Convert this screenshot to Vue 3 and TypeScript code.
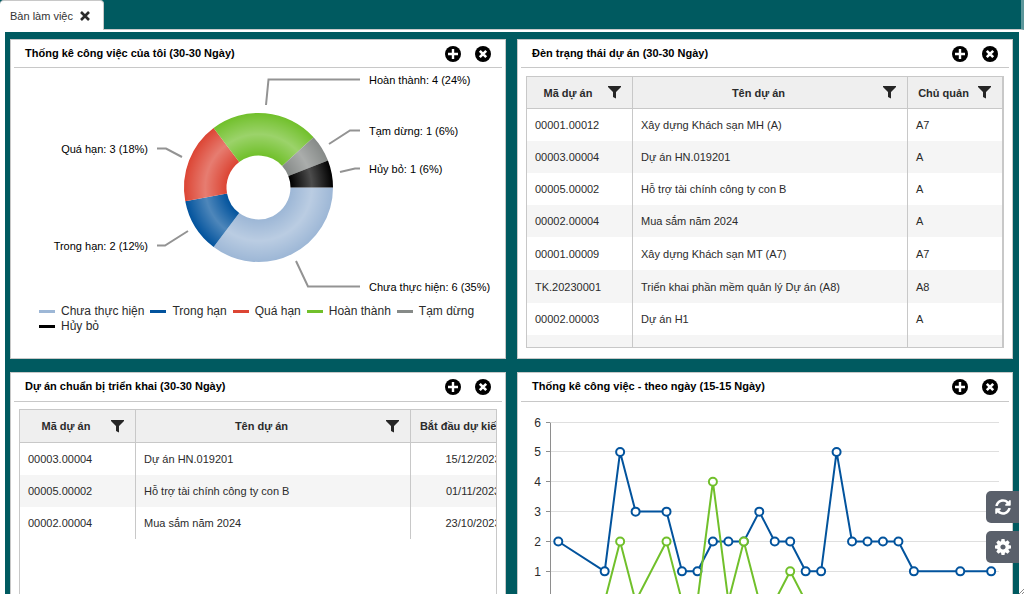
<script setup lang="ts">
interface Slice {
  label: string
  count: number
  color: string
  leader: string
  x: number
  y: number
  anchor: 'start' | 'end'
}

interface Project {
  code: string
  name: string
  last: string
  tall?: boolean
}

type Sample = [day: number, value: number]

const slices: Slice[] = [
  { label: 'Chưa thực hiện', count: 6, color: '#9db7d6', leader: '285,193 297,218.5 349,218.5', x: 358, y: 223, anchor: 'start' },
  { label: 'Trong hạn', count: 2, color: '#02539d', leader: '177,163 154,177.5 146,177.5', x: 137, y: 182, anchor: 'end' },
  { label: 'Quá hạn', count: 3, color: '#dc4534', leader: '171,89 155,80.5 146,80.5', x: 137, y: 85, anchor: 'end' },
  { label: 'Hoàn thành', count: 4, color: '#71c02b', leader: '255,37 257.5,11.5 349,11.5', x: 358, y: 16, anchor: 'start' },
  { label: 'Tạm dừng', count: 1, color: '#868a88', leader: '318,76 339,62.5 349,62.5', x: 358, y: 67, anchor: 'start' },
  { label: 'Hủy bỏ', count: 1, color: '#000000', leader: '329,104 344,100.5 349,100.5', x: 358, y: 105, anchor: 'start' },
]

const total = slices.reduce((sum, s) => sum + s.count, 0)
const center = { x: 247.5, y: 119.5 }
const outer = 74.5
const inner = 32

function polar(radius: number, angle: number): string {
  return `${(center.x + radius * Math.cos(angle)).toFixed(2)} ${(center.y + radius * Math.sin(angle)).toFixed(2)}`
}

let turn = 0
const arcs = slices.map((s) => {
  const from = turn
  turn += (s.count / total) * Math.PI * 2
  return {
    color: s.color,
    d: `M${polar(outer, from)}A${outer} ${outer} 0 0 1 ${polar(outer, turn)}L${polar(inner, turn)}A${inner} ${inner} 0 0 0 ${polar(inner, from)}Z`,
  }
})

function caption(s: Slice): string {
  return `${s.label}: ${s.count} (${Math.round((s.count / total) * 100)}%)`
}

const statusRows: Project[] = [
  { code: '00001.00012', name: 'Xây dựng Khách sạn MH (A)', last: 'A7' },
  { code: '00003.00004', name: 'Dự án HN.019201', last: 'A' },
  { code: '00005.00002', name: 'Hỗ trợ tài chính công ty con B', last: 'A' },
  { code: '00002.00004', name: 'Mua sắm năm 2024', last: 'A' },
  { code: '00001.00009', name: 'Xây dựng Khách sạn MT (A7)', last: 'A7', tall: true },
  { code: 'TK.20230001', name: 'Triển khai phần mềm quản lý Dự án (A8)', last: 'A8', tall: true },
  { code: '00002.00003', name: 'Dự án H1', last: 'A' },
  { code: '', name: '', last: '' },
]

const upcomingRows: Project[] = [
  { code: '00003.00004', name: 'Dự án HN.019201', last: '15/12/2023' },
  { code: '00005.00002', name: 'Hỗ trợ tài chính công ty con B', last: '01/11/2023' },
  { code: '00002.00004', name: 'Mua sắm năm 2024', last: '23/10/2023' },
]

const planned: Sample[] = [
  [0, 2], [3, 1], [4, 5], [5, 3], [7, 3], [8, 1], [9, 1], [10, 2], [11, 2], [12, 2], [13, 3], [14, 2],
  [15, 2], [16, 1], [17, 1], [18, 5], [19, 2], [20, 2], [21, 2], [22, 2], [23, 1], [26, 1], [28, 1],
]
const finished: Sample[] = [
  [3, 0], [4, 2], [5, 0], [7, 2], [8, 0], [9, 0], [10, 4], [11, 0], [12, 2], [13, 0], [14, 0], [15, 1], [16, 0],
]
const series = [
  { color: '#02539d', samples: planned },
  { color: '#71c02b', samples: finished },
]
const levels = [6, 5, 4, 3, 2, 1, 0]

const dayX = (day: number): number => 40.3 + day * 15.46
const valueY = (value: number): number => 199.2 - value * 29.85
const gridY = (value: number): number => Math.floor(valueY(value)) + 0.5
const line = (samples: Sample[]): string => samples.map(([d, v]) => `${dayX(d).toFixed(1)},${valueY(v).toFixed(1)}`).join(' ')

const teeth = [0, 45, 90, 135, 180, 225, 270, 315]

const panels = [
  { id: 'mine', title: 'Thống kê công việc của tôi (30-30 Ngày)' },
  { id: 'status', title: 'Đèn trạng thái dự án (30-30 Ngày)' },
  { id: 'upcoming', title: 'Dự án chuẩn bị triển khai (30-30 Ngày)' },
  { id: 'daily', title: 'Thống kê công việc - theo ngày (15-15 Ngày)' },
]

const tables = {
  status: { heads: ['Mã dự án', 'Tên dự án', 'Chủ quản'], rows: statusRows },
  upcoming: { heads: ['Mã dự án', 'Tên dự án', 'Bắt đầu dự kiến'], rows: upcomingRows },
}
</script>

<template>
  <div class="page">
    <nav class="tabs">
      <div class="tab">
        <a href="#" class="tab-link">Bàn làm việc</a>
        <button type="button" class="tab-close" aria-label="Đóng">
          <svg viewBox="0 0 10 10" width="10" height="10"><path d="M1 1L9 9M9 1L1 9" stroke="#2b2b2b" stroke-width="2.6" /></svg>
        </button>
      </div>
    </nav>

    <main class="workspace">
      <section v-for="panel in panels" :key="panel.id" class="panel">
        <header class="panel-head">
          <h2>{{ panel.title }}</h2>
          <div class="tools">
            <button type="button" aria-label="Thêm">
              <svg viewBox="0 0 16 16" width="16" height="16"><circle cx="8" cy="8" r="8" /><path d="M8 3V13M3 8H13" stroke="#fff" stroke-width="2.4" /></svg>
            </button>
            <button type="button" aria-label="Đóng">
              <svg viewBox="0 0 16 16" width="16" height="16"><circle cx="8" cy="8" r="8" /><path d="M4.8 4.8L11.2 11.2M11.2 4.8L4.8 11.2" stroke="#fff" stroke-width="2.6" /></svg>
            </button>
          </div>
        </header>

        <div v-if="panel.id === 'mine'" class="donut">
          <svg viewBox="0 0 494 232" role="img" :aria-label="panel.title">
            <defs>
              <radialGradient id="bevel" gradientUnits="userSpaceOnUse" :cx="center.x" :cy="center.y" :r="outer">
                <stop offset="0.43" stop-color="#fff" stop-opacity="0" />
                <stop offset="0.715" stop-color="#fff" stop-opacity="0.3" />
                <stop offset="1" stop-color="#fff" stop-opacity="0" />
              </radialGradient>
            </defs>
            <path v-for="arc in arcs" :key="arc.color" :d="arc.d" :fill="arc.color" />
            <path v-for="arc in arcs" :key="'b' + arc.color" :d="arc.d" fill="url(#bevel)" />
            <g v-for="s in slices" :key="s.label">
              <polyline :points="s.leader" fill="none" stroke="#939393" stroke-width="2" />
              <text :x="s.x" :y="s.y" :text-anchor="s.anchor">{{ caption(s) }}</text>
            </g>
          </svg>
          <ul class="legend">
            <li v-for="s in slices" :key="s.label"><i :style="{ background: s.color }"></i>{{ s.label }}</li>
          </ul>
        </div>

        <div v-else-if="panel.id === 'status' || panel.id === 'upcoming'" class="grid" :class="panel.id">
          <table>
            <colgroup><col class="c1" /><col class="c2" /><col class="c3" /></colgroup>
            <thead>
              <tr>
                <th v-for="head in tables[panel.id as 'status' | 'upcoming'].heads" :key="head" scope="col">
                  <div class="th">
                    <span>{{ head }}</span>
                    <button type="button" :aria-label="'Lọc ' + head">
                      <svg viewBox="0 0 13 13" width="13" height="13"><path d="M0 0H13V1L8 6V12.500L5 11V6L0 1Z" fill="#262626" /></svg>
                    </button>
                  </div>
                </th>
              </tr>
            </thead>
            <tbody>
              <tr v-for="row in tables[panel.id as 'status' | 'upcoming'].rows" :key="row.code" :class="{ tall: row.tall }">
                <td>{{ row.code }}</td>
                <td>{{ row.name }}</td>
                <td>{{ row.last }}</td>
              </tr>
            </tbody>
          </table>
        </div>

        <svg v-else class="lines" viewBox="0 0 494 280" role="img" :aria-label="panel.title">
          <g v-for="level in levels" :key="level">
            <line x1="33" x2="481" :y1="gridY(level)" :y2="gridY(level)" stroke="#dfdfdf" />
            <line x1="28" x2="32" :y1="gridY(level)" :y2="gridY(level)" stroke="#8e8e8e" />
            <text x="23" :y="gridY(level) + 4" text-anchor="end">{{ level }}</text>
          </g>
          <line x1="32.5" x2="32.5" :y1="gridY(6)" :y2="gridY(0)" stroke="#8e8e8e" />
          <g v-for="s in series" :key="s.color" fill="none" :stroke="s.color" stroke-width="2">
            <polyline :points="line(s.samples)" stroke-linejoin="round" />
            <circle v-for="[day, value] in s.samples" :key="day" :cx="dayX(day)" :cy="valueY(value)" r="4" fill="#fff" />
          </g>
        </svg>
      </section>
    </main>

    <aside class="float">
      <button type="button" aria-label="Tải lại">
        <svg viewBox="0 0 512 512" width="16" height="16" fill="#fff">
          <path d="M370.7 133.3C339.5 104 298.900 88 255.800 88c-77.400.1-144.300 53.200-162.700 126.900-1.400 5.300-6.200 9.100-11.700 9.100H24.100c-7.500 0-13.200-6.800-11.800-14.200C33.900 94.900 134.800 8 256 8c66.400 0 126.800 26.100 171.300 68.700L463 41C478.100 25.900 504 36.600 504 57.900V192c0 13.300-10.700 24-24 24H345.900c-21.300 0-32-25.900-16.900-41zM32 296h134.100c21.300 0 32 25.900 16.900 41l-41.700 41.700c31.200 29.300 71.800 45.300 114.800 45.300 77.500-.1 144.400-53.100 162.800-126.800 1.400-5.400 6.200-9.200 11.700-9.200h57.300c7.500 0 13.200 6.800 11.800 14.200C478.100 417.100 377.200 504 256 504c-66.400 0-126.800-26.100-171.300-68.700L49 471C33.900 486.100 8 475.400 8 454.100V320c0-13.300 10.700-24 24-24z" />
        </svg>
      </button>
      <button type="button" aria-label="Cài đặt">
        <svg viewBox="-8 -8 16 16" width="16" height="16">
          <path v-for="t in teeth" :key="t" d="M-2.100 -5L-1.500 -8H1.500L2.100 -5Z" fill="#fff" :transform="`rotate(${t})`" />
          <circle r="4.300" fill="none" stroke="#fff" stroke-width="3.400" />
        </svg>
      </button>
    </aside>
    <svg class="grip" viewBox="0 0 5 5" width="5" height="5" aria-hidden="true"><path d="M0 5L5 0M3 5L5 3" stroke="#8a8a8a" /></svg>
  </div>
</template>

<style>
body {
  margin: 0;
  background: #fff;
}
</style>

<style scoped>
.page {
  position: relative;
  display: flex;
  flex-direction: column;
  box-sizing: border-box;
  height: 100vh;
  overflow: hidden;
  font-family: "Liberation Sans", Arial, sans-serif;
  font-size: 11px;
  line-height: 14px;
  color: #2b2b2b;
}
button {
  display: block;
  padding: 0;
  border: 0;
  background: none;
  cursor: pointer;
}
svg {
  display: block;
}
.tabs {
  flex: none;
  display: flex;
  height: 29px;
  background: #005a60;
  border-bottom: 1px solid #c8c8c8;
  border-right: 3px solid #5c979b;
}
.tab {
  display: flex;
  align-items: center;
  gap: 7px;
  margin-bottom: -1px;
  padding: 0 13px 0 10px;
  background: #fff;
  border-top: 1px solid #c8c8c8;
  border-right: 1px solid #c8c8c8;
  border-radius: 4px 4px 0 0;
}
.tab-link {
  color: #333;
  text-decoration: none;
}
.workspace {
  flex: 1;
  min-height: 0;
  overflow: hidden;
  display: grid;
  grid-template-columns: minmax(0, 1fr) minmax(0, 1fr);
  grid-auto-rows: max-content;
  gap: 13px 11px;
  margin: 2px 5px 0;
  padding: 7px 6px 0 5px;
  background: #005a60;
}
.panel {
  box-sizing: border-box;
  min-height: 320px;
  background: #fff;
  border: 1px solid #c8c8c8;
}
.panel-head {
  display: flex;
  align-items: flex-start;
  justify-content: space-between;
  margin: 0 3px;
  padding: 6px 11px 5px;
  border-bottom: 1px solid #c8c8c8;
}
.panel:nth-child(n + 3) .panel-head {
  padding-bottom: 6px;
}
.panel-head h2 {
  margin: 0;
  font-size: 11px;
  line-height: 14px;
  color: #000;
}
.tools {
  display: flex;
  gap: 14px;
}
.donut svg,
.lines {
  width: 100%;
  height: auto;
}
.donut text {
  font-size: 11px;
  fill: #000;
}
.lines text {
  font-size: 12px;
  fill: #2b2b2b;
}
.legend {
  display: flex;
  flex-wrap: wrap;
  column-gap: 6px;
  margin: 0;
  padding: 4px 0 0 28px;
  list-style: none;
  font-size: 12px;
  line-height: 15px;
}
.legend li {
  display: flex;
  align-items: center;
  gap: 6px;
}
.legend i {
  width: 16px;
  height: 3px;
}
.grid {
  box-sizing: border-box;
  margin: 8px;
  height: 272px;
  overflow: hidden;
  border: 1px solid #c8c8c8;
}
.status {
  border-right-width: 2px;
}
.upcoming {
  margin-top: 7px;
}
table {
  table-layout: fixed;
  width: 100%;
  border-spacing: 0;
}
.status .c1 {
  width: 106px;
}
.status .c3 {
  width: 94px;
}
.upcoming table {
  width: 515px;
}
.upcoming .c1 {
  width: 116px;
}
.upcoming .c3 {
  width: 124px;
}
th {
  height: 31px;
  padding: 0;
  background: #efefef;
  border-bottom: 1px solid #c8c8c8;
}
.upcoming th {
  height: 32px;
}
.th {
  display: flex;
  align-items: center;
  gap: 7px;
  padding: 0 11px 0 8px;
  white-space: nowrap;
}
.th span {
  flex: 1;
  text-align: center;
}
td {
  height: 32px;
  padding: 0 8px;
  white-space: nowrap;
}
.tall td {
  height: 33px;
}
th:not(:last-child),
td:not(:last-child) {
  border-right: 1px solid #c8c8c8;
}
tbody tr:nth-child(even) {
  background: #f5f5f5;
}
.upcoming td:last-child {
  text-align: center;
}
.float {
  position: absolute;
  right: 5px;
  bottom: 31px;
  display: flex;
  flex-direction: column;
  gap: 8px;
}
.float button {
  display: grid;
  place-items: center;
  width: 33px;
  height: 32px;
  border-radius: 5px 0 0 5px;
  background: #5a606b;
}
.grip {
  position: absolute;
  right: 0;
  bottom: 0;
}
</style>
